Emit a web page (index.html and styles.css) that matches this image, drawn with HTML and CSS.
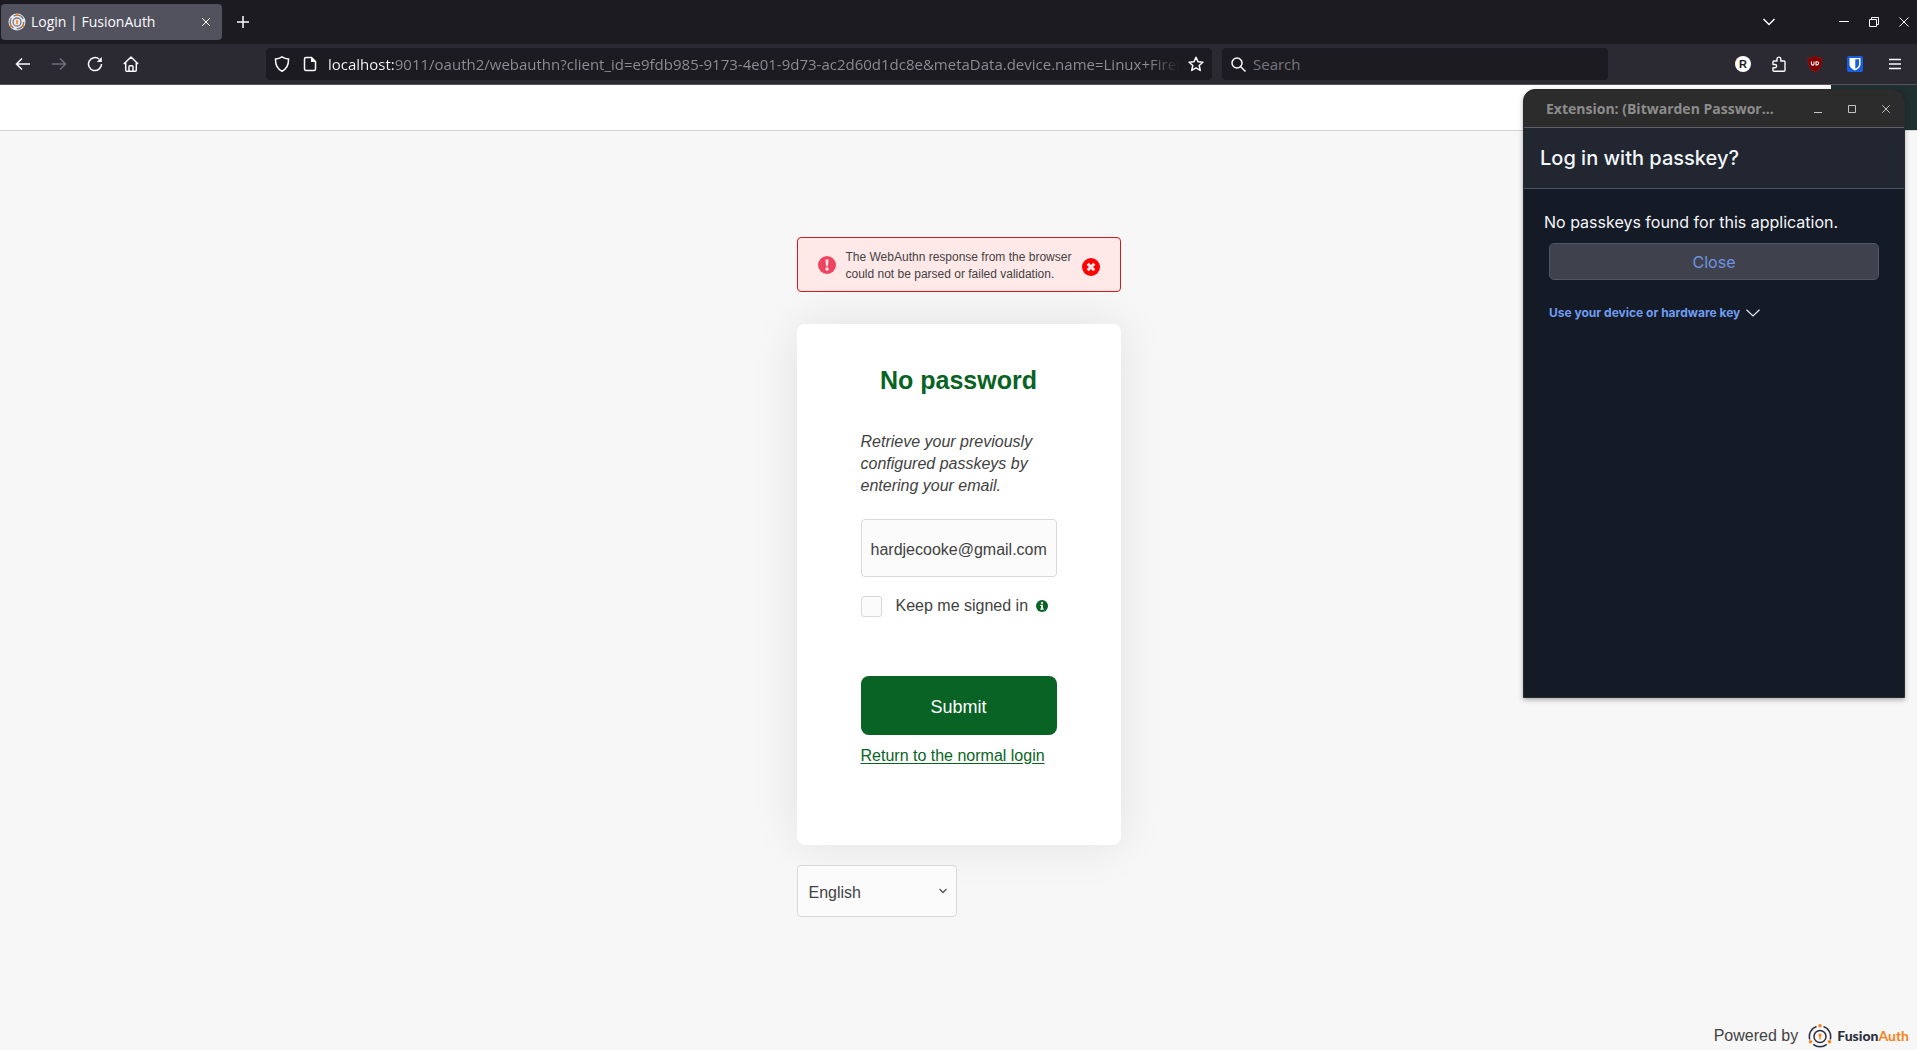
FILE: index.html
```html
<!DOCTYPE html>
<html lang="en">
<head>
<meta charset="utf-8">
<title>Login | FusionAuth</title>
<link rel="stylesheet" href="styles.css">
</head>
<body>
<header class="browser">
  <div class="tabbar">
    <div class="tab">
      <svg class="favicon" width="18" height="18" viewBox="0 0 18 18" fill="none"><circle cx="9" cy="9" r="8.5" fill="#e9e9ee"/><circle cx="9" cy="9" r="6.8" stroke="#77777f" stroke-width="1.3" stroke-dasharray="11 3.2"/><circle cx="9" cy="9" r="4" stroke="#77777f" stroke-width="1.3"/><path d="M9 7v4" stroke="#f58320" stroke-width="1.6"/><circle cx="9" cy="1.8" r="1.2" fill="#f58320"/><circle cx="2.8" cy="13" r="1.2" fill="#f58320"/><circle cx="15.2" cy="13" r="1.2" fill="#f58320"/></svg>
      <span class="tab-title">Login | FusionAuth</span>
      <button class="icon-btn tab-close" aria-label="Close tab"><svg width="10" height="10" viewBox="0 0 10 10"><path d="M1 1l8 8M9 1L1 9"/></svg></button>
    </div>
    <button class="icon-btn new-tab" aria-label="New tab"><svg width="12" height="12" viewBox="0 0 12 12"><path d="M6 0v12M0 6h12" stroke-width="1.5"/></svg></button>
    <div class="window-controls">
      <button class="icon-btn all-tabs" aria-label="List all tabs"><svg width="14" height="10" viewBox="0 0 14 10"><path d="M1.5 2L7 7.500 12.500 2" stroke-width="1.500"/></svg></button>
      <button class="icon-btn" aria-label="Minimize"><svg width="10" height="10" viewBox="0 0 10 10"><path d="M0 4.500h10"/></svg></button>
      <button class="icon-btn" aria-label="Restore"><svg width="10" height="10" viewBox="0 0 10 10"><path d="M.5 2.500h7v7h-7zM2.500 2.500v-2h7v7h-2"/></svg></button>
      <button class="icon-btn" aria-label="Close window"><svg width="10" height="10" viewBox="0 0 10 10"><path d="M.5.5l9 9M9.500.5l-9 9"/></svg></button>
    </div>
  </div>
  <div class="toolbar">
    <nav class="nav-buttons">
      <button class="icon-btn" aria-label="Back"><svg width="16" height="16" viewBox="0 0 16 16"><path d="M15 8H2M7 2.500L1.500 8 7 13.500" stroke-width="1.500"/></svg></button>
      <button class="icon-btn dim" aria-label="Forward"><svg width="16" height="16" viewBox="0 0 16 16"><path d="M1 8h13M9 2.500L14.500 8 9 13.500" stroke-width="1.500"/></svg></button>
      <button class="icon-btn" aria-label="Reload"><svg width="16" height="16" viewBox="0 0 16 16"><path d="M12.300 3.200A6.500 6.500 0 1 0 14.500 8" stroke-width="1.500"/><path d="M14.800 1v5h-5z" fill="#fbfbfe" stroke="none"/></svg></button>
      <button class="icon-btn" aria-label="Home"><svg width="16" height="16" viewBox="0 0 16 16" stroke-linejoin="round"><path d="M.8 8L8 1l7.200 7M2.700 6.500v7.700q0 1 1 1h8.600q1 0 1-1V6.500M6 15v-4.200q0-1 1-1h2q1 0 1 1V15" stroke-width="1.500"/></svg></button>
    </nav>
    <div class="field url-field">
      <svg width="16" height="16" viewBox="0 0 16 16"><path d="M8 .8c2 1.300 4 2 6.500 2.200.2 5.500-1.500 10-6.500 12.200C3 13 1.300 8.500 1.500 3 4 2.800 6 2.100 8 .8z" stroke-width="1.500"/></svg>
      <svg class="page-icon" width="14" height="16" viewBox="0 0 14 16"><path d="M3 1.500h5.500l4 4V13q0 1.500-1.500 1.500H3Q1.500 14.500 1.500 13V3Q1.500 1.500 3 1.500z" stroke-width="1.500"/><path d="M8 1v5h5z" fill="#fbfbfe" stroke="none"/></svg>
      <input class="url" type="text" aria-label="Address" value="localhost:9011/oauth2/webauthn?client_id=e9fdb985-9173-4e01-9d73-ac2d60d1dc8e&amp;metaData.device.name=Linux+Firef">
      <button class="icon-btn" aria-label="Bookmark"><svg width="16" height="16" viewBox="0 0 16 16" stroke-linejoin="round"><path d="M8 1.200l2 4.500 4.900.5-3.700 3.300 1.100 4.900L8 11.900l-4.300 2.500 1.100-4.900L1.100 6.200 6 5.700z" stroke-width="1.500"/></svg></button>
    </div>
    <div class="field search-field">
      <svg width="15" height="15" viewBox="0 0 15 15"><circle cx="6" cy="6" r="5" stroke-width="1.500"/><path d="M9.500 9.500l5 5" stroke-width="1.500"/></svg>
      <input class="search" type="text" aria-label="Search" placeholder="Search">
    </div>
    <div class="extensions">
      <button class="icon-btn" aria-label="Account"><span class="avatar">R</span></button>
      <button class="icon-btn" aria-label="Extensions"><svg width="16" height="16" viewBox="0 0 16 16" stroke-linejoin="round"><path d="M3 5h3V3a1.900 1.900 0 0 1 3.800 0v2h3.200q1 0 1 1v8.200q0 1-1 1H3q-1 0-1-1v-2.500h2a1.600 1.600 0 0 0 0-3.200H2V6q0-1 1-1z" stroke-width="1.400"/></svg></button>
      <button class="icon-btn ublock" aria-label="uBlock Origin"><svg width="16" height="16" viewBox="0 0 16 16"><path d="M8 0c2.500 1.500 4.500 2 7 2 0 7-1 11-7 14C2 13 1 9 1 2c2.500 0 4.500-.5 7-2z" fill="#800000" stroke="#a01010" stroke-width=".6"/><path d="M4.400 5.500v2.300a1.300 1.300 0 0 0 2.600 0V5.500M9 5.700v3.200h1a1.600 1.600 0 0 0 0-3.200z" stroke-width="1.100"/></svg></button>
      <button class="icon-btn bitwarden" aria-label="Bitwarden"><svg width="16" height="16" viewBox="0 0 16 16"><rect width="16" height="16" rx="1.500" fill="#175ddc" stroke="none"/><path d="M2.500 2h11v6.500Q13.500 12 8 14.500 2.500 12 2.500 8.500z" fill="#fff" stroke="none"/><path d="M8.300 3.300h3.700v5q0 2.500-3.700 4.500z" fill="#175ddc" stroke="none"/></svg></button>
      <button class="icon-btn" aria-label="Menu"><svg width="12" height="12" viewBox="0 0 12 12"><path d="M0 1.500h12M0 6h12M0 10.500h12" stroke-width="1.300"/></svg></button>
    </div>
  </div>
</header>

<div class="site">
  <div class="site-header"></div>
  <main class="login">
    <div class="alert" role="alert">
      <svg width="18" height="18" viewBox="0 0 18 18"><circle cx="9" cy="9" r="9" fill="#ee4460"/><path d="M7.500 3.500h3L10 10.200H8z" fill="#ffe8e8"/><circle cx="9" cy="13" r="1.700" fill="#ffe8e8"/></svg>
      <p>The WebAuthn response from the browser could not be parsed or failed validation.</p>
      <button class="dismiss" aria-label="Dismiss"><svg width="18" height="18" viewBox="0 0 18 18"><circle cx="9" cy="9" r="9" fill="#f00"/><path d="M5.700 5.700l6.600 6.600M12.300 5.700l-6.600 6.600" stroke="#ffe8e8" stroke-width="3"/></svg></button>
    </div>
    <form class="card">
      <h1>No password</h1>
      <p class="intro">Retrieve your previously configured passkeys by entering your email.</p>
      <input class="email" type="text" aria-label="Email" value="hardjecooke@gmail.com">
      <div class="remember">
        <input id="remember" type="checkbox">
        <label for="remember">Keep me signed in</label>
        <svg width="12" height="12" viewBox="0 0 12 12"><circle cx="6" cy="6" r="6" fill="#096324"/><path d="M5 2h2v1.700H5zM4.300 4.800H7v3.700h.8v1.300H4.300V8.500h.8V6h-.8z" fill="#fff"/></svg>
      </div>
      <button class="submit" type="button">Submit</button>
      <a class="return" href="#">Return to the normal login</a>
    </form>
    <div class="locale">
      <select aria-label="Language"><option>English</option></select>
      <svg width="10" height="10" viewBox="0 0 10 10" fill="none"><path d="M1.500 3L5 6.500 8.500 3" stroke="#555" stroke-width="1.300"/></svg>
    </div>
  </main>
  <footer class="powered">
    <span>Powered by</span>
    <a class="brand" href="#">
      <svg width="24" height="26" viewBox="0 0 24 26" fill="none"><path d="M15.500 3.500A10.500 10.500 0 0 1 22.200 16.500M18.700 21.300A10.500 10.500 0 0 1 5.300 21.300M1.800 16.500A10.500 10.500 0 0 1 8.500 3.500" stroke="#2b2e40" stroke-width="1.500"/><circle cx="12" cy="13.500" r="6" stroke="#2b2e40" stroke-width="1.500"/><circle cx="12" cy="12" r="1.600" fill="#f58320"/><path d="M12 12v4.500" stroke="#f58320" stroke-width="1.500"/><circle cx="12" cy="2.800" r="1.800" fill="#f58320"/><circle cx="2.500" cy="18.800" r="1.800" fill="#f58320"/><circle cx="21.500" cy="18.800" r="1.800" fill="#f58320"/></svg>
      <span class="wordmark">Fusion<b>Auth</b></span>
    </a>
  </footer>
</div>

<section class="popup" aria-label="Bitwarden">
  <div class="popup-title">
    <span>Extension: (Bitwarden Passwor…</span>
    <button class="icon-btn" aria-label="Minimize"><svg width="8" height="8" viewBox="0 0 8 8"><path d="M0 7.500h8"/></svg></button>
    <button class="icon-btn" aria-label="Maximize"><svg width="8" height="8" viewBox="0 0 8 8"><path d="M.5.5h7v7h-7z"/></svg></button>
    <button class="icon-btn" aria-label="Close"><svg width="8" height="8" viewBox="0 0 8 8"><path d="M.3.3l7.400 7.400M7.700.3L.3 7.700"/></svg></button>
  </div>
  <h2>Log in with passkey?</h2>
  <div class="popup-body">
    <p>No passkeys found for this application.</p>
    <button class="popup-close">Close</button>
    <button class="hardware">Use your device or hardware key <svg width="14" height="8" viewBox="0 0 14 8" fill="none"><path d="M.5.8L7 7 13.500.8" stroke="#e5e9f5" stroke-width="1.200"/></svg></button>
  </div>
</section>
</body>
</html>
```
FILE: styles.css
```css
* { box-sizing: border-box; }

body {
  margin: 0;
  min-height: 100vh;
  display: flex;
  flex-direction: column;
  position: relative;
  background: #f7f7f7;
  color: #424242;
  font: 16px/22px "Liberation Sans", Arial, sans-serif;
}

button, input, select { font: inherit; color: inherit; }
button { border: 0; padding: 0; background: none; cursor: pointer; }
svg { display: block; flex: none; }

/* Browser chrome */
.browser {
  color: #fbfbfe;
  font-family: "Open Sans", sans-serif;
}
.browser svg, .popup-title svg { fill: none; stroke: currentColor; }

.icon-btn {
  display: flex;
  align-items: center;
  justify-content: center;
  flex: none;
  width: 36px;
  height: 32px;
}
.dim { color: #6f6e78; }

.tabbar {
  display: flex;
  align-items: center;
  height: 44px;
  padding-left: 1px;
  background: #1c1b22;
}
.tab {
  display: flex;
  align-items: center;
  width: 221px;
  height: 36px;
  padding-left: 7px;
  border-radius: 4px;
  background: #52525e;
}
.browser .favicon { stroke: none; }
.tab-title { flex: 1; padding-left: 5px; font-size: 14px; }
.tab-close { width: 32px; }
.new-tab { margin-left: 3px; }
.window-controls { display: flex; margin: 0 -2px 0 auto; }
.window-controls .icon-btn { width: 30px; }
.window-controls .all-tabs { margin-right: 45px; }

.toolbar {
  display: flex;
  align-items: center;
  gap: 10px;
  height: 41px;
  background: #2b2a33;
  border-bottom: 1px solid #55545c;
}
.nav-buttons { display: flex; flex: none; width: 256px; padding-left: 5px; }
.field {
  display: flex;
  align-items: center;
  height: 32px;
  border-radius: 4px;
  background: #1c1b22;
}
.field input {
  flex: 1;
  min-width: 0;
  padding: 0;
  border: 0;
  outline: 0;
  background: none;
  font-size: 15px;
}
.url-field { flex: 938 1 0; padding-left: 8px; gap: 13px; }
.page-icon { margin-right: -2px; }
.field .url {
  color: transparent;
  background: linear-gradient(to right, #fbfbfe 66px, #8f8e97 66px, #8f8e97 calc(100% - 32px), transparent);
  background-clip: text;
}
.url-field .icon-btn { width: 32px; margin-left: -13px; }
.search-field { flex: 377 1 0; padding-left: 9px; gap: 7px; }
.search::placeholder { color: #77767f; opacity: 1; }
.extensions { display: flex; flex: none; width: 299px; justify-content: flex-end; padding-right: 4px; }
.bitwarden { width: 44px; }
.avatar {
  width: 16px;
  height: 16px;
  border-radius: 50%;
  background: #fff;
  color: #1c1b22;
  font: bold 11px/16px "Liberation Sans", sans-serif;
}

/* Login page */
.site { flex: 1; display: flex; flex-direction: column; }
.site-header {
  height: 46px;
  border-bottom: 1px solid #d5d5d5;
  background: linear-gradient(to left, #203030 86px, #fff 86px);
}
.login {
  width: 324px;
  margin: 0 auto;
  padding-top: 106px;
}
.alert {
  display: flex;
  align-items: center;
  height: 55px;
  padding: 0 20px;
  border: 1px solid #d01c1c;
  border-radius: 4px;
  background: #ffe8e8;
  font-size: 12px;
  line-height: 17px;
}
.alert p { flex: 1; margin: 2px 10px 0; }
.dismiss { margin-top: 4px; }

.card {
  display: flex;
  flex-direction: column;
  min-height: 521px;
  margin-top: 32px;
  padding: 40px 64px;
  border-radius: 8px;
  background: #fff;
  box-shadow: 0 0 48px 0 rgba(0, 0, 0, 0.09);
}
h1 {
  margin: 0;
  color: #096324;
  font-size: 25px;
  line-height: 32px;
  text-align: center;
}
.intro { margin: 35px 0 22px; font-style: italic; }
.email {
  width: 100%;
  height: 58px;
  padding: 4px 9px 0;
  border: 1px solid #d9d9d9;
  border-radius: 4px;
  background: #fbfbfb;
}
.remember { display: flex; align-items: center; margin-top: 18px; }
.remember input {
  appearance: none;
  width: 21px;
  height: 21px;
  margin: 0 14px 0 0;
  border: 1px solid #d9d9d9;
  border-radius: 3px;
  background: #fbfbfb;
}
.remember svg { margin-left: 8px; }
.submit {
  height: 59px;
  margin-top: 59px;
  padding-top: 2px;
  border-radius: 8px;
  background: #096324;
  color: #fff;
  font-size: 18px;
}
.return {
  align-self: flex-start;
  margin-top: 10px;
  color: #096324;
  text-underline-offset: 2px;
}

.locale { display: grid; width: 160px; margin-top: 20px; align-items: center; }
.locale select, .locale svg { grid-area: 1 / 1; }
.locale svg { justify-self: end; margin-right: 9px; pointer-events: none; }
select {
  appearance: none;
  width: 100%;
  height: 52px;
  padding: 4px 11px 0;
  border: 1px solid #d9d9d9;
  border-radius: 4px;
  background: #fbfbfb;
}

.powered {
  display: flex;
  align-items: center;
  justify-content: flex-end;
  gap: 10px;
  margin-top: auto;
  padding: 0 8px 1px 0;
}
.brand { display: flex; align-items: center; gap: 5px; color: #2b2e40; text-decoration: none; }
.wordmark { font: 900 14px/26px Lato, sans-serif; }
.wordmark b { color: #f58320; font-weight: 700; }

/* Password manager window, floating over the page */
.popup {
  position: absolute;
  top: 89px;
  right: 12px;
  width: 382px;
  height: 609px;
  overflow: hidden;
  border: 1px solid #2a2a2c;
  border-radius: 12px 12px 0 0;
  background: #151a27;
  color: #f3f6f9;
  font-family: Inter, sans-serif;
  box-shadow: 0 2px 5px rgba(0, 0, 0, 0.3);
}
.popup-title {
  display: flex;
  align-items: center;
  height: 38px;
  padding: 0 1px 0 22px;
  border-bottom: 1px solid #5f6068;
  background: #2c2c2c;
  color: #c4c4c4;
}
.popup-title span {
  flex: 1;
  color: #8c8c8c;
  font: bold 14px/20px "Open Sans", sans-serif;
  white-space: nowrap;
}
.popup-title .icon-btn { width: 34px; }
.popup h2 {
  margin: 0;
  padding: 17px 16px;
  border-bottom: 1px solid #4f5460;
  background: #212631;
  font-size: 20px;
  font-weight: 500;
  line-height: 26px;
}
.popup-body { display: flex; flex-direction: column; align-items: flex-start; padding: 22px 25px 0; }
.popup-body p { margin: 0 0 10px -5px; white-space: nowrap; }
.popup-close {
  align-self: stretch;
  height: 37px;
  border: 1px solid #525661;
  border-radius: 5px;
  background: #3f424d;
  color: #6f93e0;
}
.hardware {
  display: flex;
  align-items: center;
  gap: 6px;
  margin-top: 22px;
  color: #6f9df1;
  font-size: 12px;
  font-weight: 700;
}
```
